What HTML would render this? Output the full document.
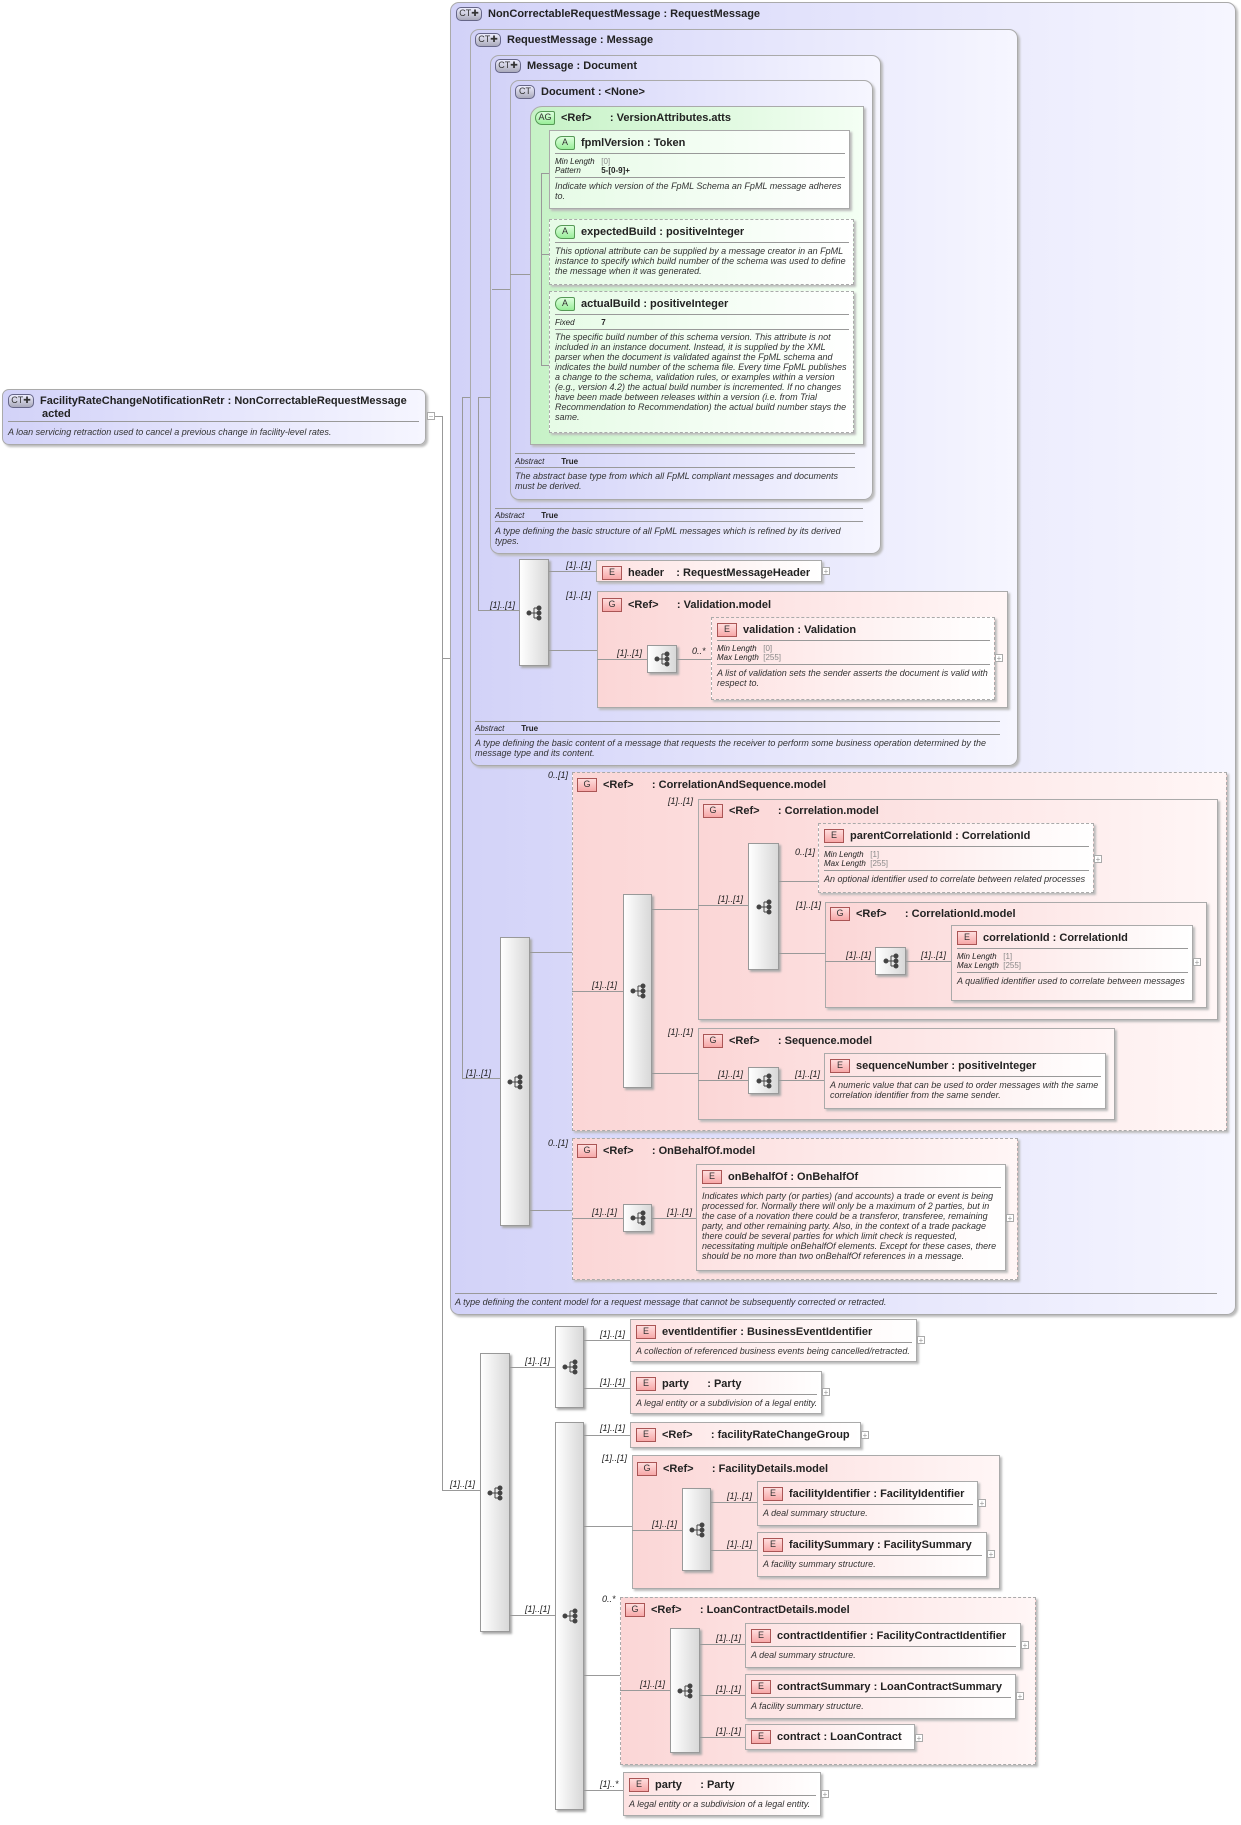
<!DOCTYPE html>
<html><head><meta charset="utf-8"><style>
body{margin:0;width:1241px;height:1825px;background:#fff;position:relative;overflow:hidden;font-family:"Liberation Sans",sans-serif;color:#222}
.b{position:absolute;box-sizing:border-box}
.ct{border:1px solid #aaa;border-radius:9px;background:linear-gradient(90deg,#d2d2f8,#f6f6ff);box-shadow:2px 2px 2px #bbb}
.ag{border:1px solid #aaa;background:linear-gradient(90deg,#c6f2c6,#f4fff4);box-shadow:2px 2px 2px #bbb}
.g{border:1px solid #aaa;background:linear-gradient(90deg,#fbd6d6,#fff6f6);box-shadow:2px 2px 2px #bbb}
.el{border:1px solid #aaa;background:linear-gradient(90deg,#fde2e2,#fff);box-shadow:2px 2px 2px #bbb;padding:4px 4px 0 5px}
.at{border:1px solid #aaa;background:linear-gradient(90deg,#e6fbe6,#fff);box-shadow:2px 2px 2px #bbb;padding:4px 4px 0 5px}
.ds{border-style:dashed}
.t{position:absolute;font-weight:bold;font-size:11px;white-space:nowrap}
.h{font-weight:bold;font-size:11px;white-space:nowrap;height:18px;line-height:16px;border-bottom:1px solid #999;margin-bottom:3px}
.i{display:inline-block;font-weight:normal;font-size:9px;line-height:11px;text-align:center;border:1px solid #a55;background:linear-gradient(#fdd,#f7a8a8);width:18px;height:12px;margin-right:6px;vertical-align:middle;color:#333}
.ia{border-color:#595;background:linear-gradient(#dfd,#9e9);border-radius:7px 2px 2px 7px}
.ic{border-color:#668;background:linear-gradient(#eef,#aab);border-radius:5px;width:24px}
.d{font-style:italic;font-size:9px;line-height:10px;color:#333}
.nw{white-space:nowrap}
.p{font-size:8px;line-height:9px}
.p i{display:inline-block;width:44px}
.p span{color:#888}
.l{position:absolute;background:#999}
.n{position:absolute;font-style:italic;font-size:9px;color:#222;white-space:nowrap}
.sq{position:absolute;box-sizing:border-box;border:1px solid #999;background:linear-gradient(90deg,#fff,#d8d8d8);box-shadow:2px 2px 2px #aaa}
.sq svg{position:absolute;left:50%;top:50%;margin:-8px 0 0 -8px}
.pl{position:absolute;width:8px;height:8px;border:1px solid #aaa;background:#fff;font-size:8px;line-height:7px;text-align:center;color:#999;box-sizing:border-box}
.hr{position:absolute;height:1px;background:#999}
</style></head><body>

<!-- root -->
<div class="b ct" style="left:2px;top:389px;width:424px;height:56px;border-radius:7px">
<div class="t" style="left:5px;top:4px;line-height:12px"><span class="i ic">CT✚</span>FacilityRateChangeNotificationRetr : NonCorrectableRequestMessage<br><span style="margin-left:34px">acted</span></div>
<div class="hr" style="left:5px;right:6px;top:31px"></div>
<div class="d" style="position:absolute;left:5px;top:37px">A loan servicing retraction used to cancel a previous change in facility-level rates.</div>
</div>
<div class="pl" style="left:427px;top:412px">−</div>
<div class="l" style="left:435px;top:416px;width:8px;height:1px"></div>
<div class="l" style="left:442px;top:416px;width:1px;height:1075px"></div>
<div class="l" style="left:442px;top:658px;width:9px;height:1px"></div>
<div class="l" style="left:442px;top:1490px;width:38px;height:1px"></div>
<div class="n" style="left:450px;top:1479px">[1]..[1]</div>

<!-- outer CT -->
<div class="b ct" style="left:450px;top:2px;width:786px;height:1313px"></div>
<div class="t" style="left:456px;top:7px"><span class="i ic">CT✚</span>NonCorrectableRequestMessage : RequestMessage</div>
<div class="hr" style="left:455px;width:762px;top:1293px"></div>
<div class="d" style="position:absolute;left:455px;top:1297px">A type defining the content model for a request message that cannot be subsequently corrected or retracted.</div>
<div class="l" style="left:462px;top:397px;width:1px;height:682px"></div>
<div class="l" style="left:462px;top:397px;width:8px;height:1px"></div>
<div class="l" style="left:462px;top:1078px;width:38px;height:1px"></div>
<div class="n" style="left:466px;top:1068px">[1]..[1]</div>

<!-- RequestMessage -->
<div class="b ct" style="left:470px;top:29px;width:548px;height:737px"></div>
<div class="t" style="left:475px;top:33px"><span class="i ic">CT✚</span>RequestMessage : Message</div>
<div class="hr" style="left:475px;width:525px;top:721px"></div>
<div class="p" style="position:absolute;left:475px;top:724px"><i>Abstract</i> <b>True</b></div>
<div class="hr" style="left:475px;width:525px;top:734px"></div>
<div class="d" style="position:absolute;left:475px;top:738px;width:525px">A type defining the basic content of a message that requests the receiver to perform some business operation determined by the message type and its content.</div>
<div class="l" style="left:478px;top:397px;width:1px;height:213px"></div>
<div class="l" style="left:478px;top:397px;width:12px;height:1px"></div>
<div class="l" style="left:478px;top:610px;width:41px;height:1px"></div>
<div class="n" style="left:490px;top:600px">[1]..[1]</div>

<!-- Message -->
<div class="b ct" style="left:490px;top:55px;width:391px;height:499px"></div>
<div class="t" style="left:495px;top:59px"><span class="i ic">CT✚</span>Message : Document</div>
<div class="hr" style="left:495px;width:368px;top:508px"></div>
<div class="p" style="position:absolute;left:495px;top:511px"><i>Abstract</i> <b>True</b></div>
<div class="hr" style="left:495px;width:368px;top:521px"></div>
<div class="d" style="position:absolute;left:495px;top:526px;width:368px">A type defining the basic structure of all FpML messages which is refined by its derived types.</div>
<div class="l" style="left:492px;top:289px;width:18px;height:1px"></div>

<!-- Document -->
<div class="b ct" style="left:510px;top:80px;width:363px;height:420px"></div>
<div class="t" style="left:515px;top:85px"><span class="i ic" style="width:18px">CT</span>Document : &lt;None&gt;</div>
<div class="hr" style="left:515px;width:340px;top:453px"></div>
<div class="p" style="position:absolute;left:515px;top:457px"><i>Abstract</i> <b>True</b></div>
<div class="hr" style="left:515px;width:340px;top:467px"></div>
<div class="d" style="position:absolute;left:515px;top:471px;width:340px">The abstract base type from which all FpML compliant messages and documents must be derived.</div>
<div class="l" style="left:510px;top:274px;width:20px;height:1px"></div>

<!-- AG -->
<div class="b ag" style="left:530px;top:106px;width:334px;height:339px;border-radius:12px 0 0 0"></div>
<div class="t" style="left:535px;top:111px"><span class="i ia">AG</span>&lt;Ref&gt; &nbsp;&nbsp;&nbsp;&nbsp; : VersionAttributes.atts</div>
<div class="l" style="left:541px;top:173px;width:1px;height:192px"></div>
<div class="l" style="left:541px;top:173px;width:8px;height:1px"></div>
<div class="l" style="left:541px;top:254px;width:8px;height:1px"></div>
<div class="l" style="left:541px;top:365px;width:8px;height:1px"></div>

<div class="b at" style="left:549px;top:130px;width:301px;height:79px">
<div class="h"><span class="i ia">A</span>fpmlVersion : Token</div>
<div class="p"><i>Min Length</i> <span>[0]</span><br><i>Pattern</i> <b>5-[0-9]+</b></div>
<div class="hr" style="position:relative;margin:2px 0 3px"></div>
<div class="d">Indicate which version of the FpML Schema an FpML message adheres to.</div></div>
<div class="b at ds" style="left:549px;top:219px;width:305px;height:66px">
<div class="h"><span class="i ia">A</span>expectedBuild : positiveInteger</div>
<div class="d">This optional attribute can be supplied by a message creator in an FpML instance to specify which build number of the schema was used to define the message when it was generated.</div></div>
<div class="b at ds" style="left:549px;top:291px;width:305px;height:142px">
<div class="h"><span class="i ia">A</span>actualBuild : positiveInteger</div>
<div class="p"><i>Fixed</i> <b>7</b></div>
<div class="hr" style="position:relative;margin:2px 0 2px"></div>
<div class="d">The specific build number of this schema version. This attribute is not included in an instance document. Instead, it is supplied by the XML parser when the document is validated against the FpML schema and indicates the build number of the schema file. Every time FpML publishes a change to the schema, validation rules, or examples within a version (e.g., version 4.2) the actual build number is incremented. If no changes have been made between releases within a version (i.e. from Trial Recommendation to Recommendation) the actual build number stays the same.</div></div>

<!-- header seq -->
<div class="sq" style="left:519px;top:559px;width:30px;height:107px"><svg width="16" height="16"><g fill="#444" stroke="#444"><circle cx="3" cy="8" r="2"/><line x1="3" y1="8" x2="8" y2="8"/><line x1="8" y1="3" x2="8" y2="13"/><line x1="8" y1="3" x2="12" y2="3"/><line x1="8" y1="8" x2="12" y2="8"/><line x1="8" y1="13" x2="12" y2="13"/><circle cx="13" cy="3" r="2"/><circle cx="13" cy="8" r="2"/><circle cx="13" cy="13" r="2"/></g></svg></div>
<div class="l" style="left:549px;top:571px;width:47px;height:1px"></div>
<div class="n" style="left:566px;top:560px">[1]..[1]</div>
<div class="l" style="left:549px;top:650px;width:48px;height:1px"></div>
<div class="n" style="left:566px;top:590px">[1]..[1]</div>
<div class="b el" style="left:596px;top:560px;width:226px;height:22px"><div class="h" style="border:0"><span class="i">E</span>header &nbsp;&nbsp; : RequestMessageHeader</div></div>
<div class="pl" style="left:822px;top:567px">+</div>

<div class="b g" style="left:597px;top:591px;width:411px;height:117px"></div>
<div class="t" style="left:602px;top:598px"><span class="i">G</span>&lt;Ref&gt; &nbsp;&nbsp;&nbsp;&nbsp; : Validation.model</div>
<div class="sq" style="left:647px;top:645px;width:30px;height:28px"><svg width="16" height="16"><g fill="#444" stroke="#444"><circle cx="3" cy="8" r="2"/><line x1="3" y1="8" x2="8" y2="8"/><line x1="8" y1="3" x2="8" y2="13"/><line x1="8" y1="3" x2="12" y2="3"/><line x1="8" y1="8" x2="12" y2="8"/><line x1="8" y1="13" x2="12" y2="13"/><circle cx="13" cy="3" r="2"/><circle cx="13" cy="8" r="2"/><circle cx="13" cy="13" r="2"/></g></svg></div>
<div class="l" style="left:597px;top:659px;width:50px;height:1px"></div>
<div class="n" style="left:617px;top:648px">[1]..[1]</div>
<div class="l" style="left:677px;top:659px;width:34px;height:1px"></div>
<div class="n" style="left:692px;top:646px">0..*</div>
<div class="b el ds" style="left:711px;top:617px;width:284px;height:83px">
<div class="h"><span class="i">E</span>validation : Validation</div>
<div class="p"><i>Min Length</i> <span>[0]</span><br><i>Max Length</i> <span>[255]</span></div>
<div class="hr" style="position:relative;margin:2px 0 3px"></div>
<div class="d">A list of validation sets the sender asserts the document is valid with respect to.</div></div>
<div class="pl" style="left:995px;top:654px">+</div>

<!-- big seq -->
<div class="sq" style="left:500px;top:937px;width:30px;height:289px"><svg width="16" height="16"><g fill="#444" stroke="#444"><circle cx="3" cy="8" r="2"/><line x1="3" y1="8" x2="8" y2="8"/><line x1="8" y1="3" x2="8" y2="13"/><line x1="8" y1="3" x2="12" y2="3"/><line x1="8" y1="8" x2="12" y2="8"/><line x1="8" y1="13" x2="12" y2="13"/><circle cx="13" cy="3" r="2"/><circle cx="13" cy="8" r="2"/><circle cx="13" cy="13" r="2"/></g></svg></div>
<div class="l" style="left:530px;top:952px;width:42px;height:1px"></div>
<div class="l" style="left:530px;top:1210px;width:42px;height:1px"></div>
<div class="n" style="left:548px;top:770px">0..[1]</div>
<div class="n" style="left:548px;top:1138px">0..[1]</div>

<!-- CorrelationAndSequence -->
<div class="b g ds" style="left:572px;top:772px;width:655px;height:359px"></div>
<div class="t" style="left:577px;top:778px"><span class="i">G</span>&lt;Ref&gt; &nbsp;&nbsp;&nbsp;&nbsp; : CorrelationAndSequence.model</div>
<div class="sq" style="left:623px;top:894px;width:29px;height:194px"><svg width="16" height="16"><g fill="#444" stroke="#444"><circle cx="3" cy="8" r="2"/><line x1="3" y1="8" x2="8" y2="8"/><line x1="8" y1="3" x2="8" y2="13"/><line x1="8" y1="3" x2="12" y2="3"/><line x1="8" y1="8" x2="12" y2="8"/><line x1="8" y1="13" x2="12" y2="13"/><circle cx="13" cy="3" r="2"/><circle cx="13" cy="8" r="2"/><circle cx="13" cy="13" r="2"/></g></svg></div>
<div class="l" style="left:572px;top:991px;width:51px;height:1px"></div>
<div class="n" style="left:592px;top:980px">[1]..[1]</div>
<div class="l" style="left:652px;top:909px;width:46px;height:1px"></div>
<div class="l" style="left:652px;top:1073px;width:46px;height:1px"></div>
<div class="n" style="left:668px;top:796px">[1]..[1]</div>
<div class="n" style="left:668px;top:1027px">[1]..[1]</div>

<div class="b g" style="left:698px;top:799px;width:520px;height:221px"></div>
<div class="t" style="left:703px;top:804px"><span class="i">G</span>&lt;Ref&gt; &nbsp;&nbsp;&nbsp;&nbsp; : Correlation.model</div>
<div class="sq" style="left:748px;top:843px;width:31px;height:127px"><svg width="16" height="16"><g fill="#444" stroke="#444"><circle cx="3" cy="8" r="2"/><line x1="3" y1="8" x2="8" y2="8"/><line x1="8" y1="3" x2="8" y2="13"/><line x1="8" y1="3" x2="12" y2="3"/><line x1="8" y1="8" x2="12" y2="8"/><line x1="8" y1="13" x2="12" y2="13"/><circle cx="13" cy="3" r="2"/><circle cx="13" cy="8" r="2"/><circle cx="13" cy="13" r="2"/></g></svg></div>
<div class="l" style="left:698px;top:905px;width:50px;height:1px"></div>
<div class="n" style="left:718px;top:894px">[1]..[1]</div>
<div class="l" style="left:779px;top:881px;width:39px;height:1px"></div>
<div class="n" style="left:795px;top:847px">0..[1]</div>
<div class="l" style="left:779px;top:953px;width:46px;height:1px"></div>
<div class="n" style="left:796px;top:900px">[1]..[1]</div>
<div class="b el ds" style="left:818px;top:823px;width:276px;height:70px">
<div class="h"><span class="i">E</span>parentCorrelationId : CorrelationId</div>
<div class="p"><i>Min Length</i> <span>[1]</span><br><i>Max Length</i> <span>[255]</span></div>
<div class="hr" style="position:relative;margin:2px 0 3px"></div>
<div class="d">An optional identifier used to correlate between related processes</div></div>
<div class="pl" style="left:1094px;top:855px">+</div>

<div class="b g" style="left:825px;top:902px;width:382px;height:106px"></div>
<div class="t" style="left:830px;top:907px"><span class="i">G</span>&lt;Ref&gt; &nbsp;&nbsp;&nbsp;&nbsp; : CorrelationId.model</div>
<div class="sq" style="left:875px;top:947px;width:31px;height:28px"><svg width="16" height="16"><g fill="#444" stroke="#444"><circle cx="3" cy="8" r="2"/><line x1="3" y1="8" x2="8" y2="8"/><line x1="8" y1="3" x2="8" y2="13"/><line x1="8" y1="3" x2="12" y2="3"/><line x1="8" y1="8" x2="12" y2="8"/><line x1="8" y1="13" x2="12" y2="13"/><circle cx="13" cy="3" r="2"/><circle cx="13" cy="8" r="2"/><circle cx="13" cy="13" r="2"/></g></svg></div>
<div class="l" style="left:825px;top:961px;width:50px;height:1px"></div>
<div class="n" style="left:846px;top:950px">[1]..[1]</div>
<div class="l" style="left:906px;top:961px;width:45px;height:1px"></div>
<div class="n" style="left:921px;top:950px">[1]..[1]</div>
<div class="b el" style="left:951px;top:925px;width:242px;height:76px">
<div class="h"><span class="i">E</span>correlationId : CorrelationId</div>
<div class="p"><i>Min Length</i> <span>[1]</span><br><i>Max Length</i> <span>[255]</span></div>
<div class="hr" style="position:relative;margin:2px 0 3px"></div>
<div class="d">A qualified identifier used to correlate between messages</div></div>
<div class="pl" style="left:1193px;top:958px">+</div>

<div class="b g" style="left:698px;top:1028px;width:417px;height:92px"></div>
<div class="t" style="left:703px;top:1034px"><span class="i">G</span>&lt;Ref&gt; &nbsp;&nbsp;&nbsp;&nbsp; : Sequence.model</div>
<div class="sq" style="left:748px;top:1067px;width:31px;height:27px"><svg width="16" height="16"><g fill="#444" stroke="#444"><circle cx="3" cy="8" r="2"/><line x1="3" y1="8" x2="8" y2="8"/><line x1="8" y1="3" x2="8" y2="13"/><line x1="8" y1="3" x2="12" y2="3"/><line x1="8" y1="8" x2="12" y2="8"/><line x1="8" y1="13" x2="12" y2="13"/><circle cx="13" cy="3" r="2"/><circle cx="13" cy="8" r="2"/><circle cx="13" cy="13" r="2"/></g></svg></div>
<div class="l" style="left:698px;top:1080px;width:50px;height:1px"></div>
<div class="n" style="left:718px;top:1069px">[1]..[1]</div>
<div class="l" style="left:779px;top:1080px;width:45px;height:1px"></div>
<div class="n" style="left:795px;top:1069px">[1]..[1]</div>
<div class="b el" style="left:824px;top:1053px;width:282px;height:56px">
<div class="h"><span class="i">E</span>sequenceNumber : positiveInteger</div>
<div class="d">A numeric value that can be used to order messages with the same correlation identifier from the same sender.</div></div>

<!-- OnBehalfOf -->
<div class="b g ds" style="left:572px;top:1138px;width:446px;height:142px"></div>
<div class="t" style="left:577px;top:1144px"><span class="i">G</span>&lt;Ref&gt; &nbsp;&nbsp;&nbsp;&nbsp; : OnBehalfOf.model</div>
<div class="sq" style="left:623px;top:1204px;width:29px;height:28px"><svg width="16" height="16"><g fill="#444" stroke="#444"><circle cx="3" cy="8" r="2"/><line x1="3" y1="8" x2="8" y2="8"/><line x1="8" y1="3" x2="8" y2="13"/><line x1="8" y1="3" x2="12" y2="3"/><line x1="8" y1="8" x2="12" y2="8"/><line x1="8" y1="13" x2="12" y2="13"/><circle cx="13" cy="3" r="2"/><circle cx="13" cy="8" r="2"/><circle cx="13" cy="13" r="2"/></g></svg></div>
<div class="l" style="left:572px;top:1218px;width:51px;height:1px"></div>
<div class="n" style="left:592px;top:1207px">[1]..[1]</div>
<div class="l" style="left:652px;top:1218px;width:44px;height:1px"></div>
<div class="n" style="left:667px;top:1207px">[1]..[1]</div>
<div class="b el" style="left:696px;top:1164px;width:310px;height:107px">
<div class="h"><span class="i">E</span>onBehalfOf : OnBehalfOf</div>
<div class="d">Indicates which party (or parties) (and accounts) a trade or event is being processed for. Normally there will only be a maximum of 2 parties, but in the case of a novation there could be a transferor, transferee, remaining party, and other remaining party. Also, in the context of a trade package there could be several parties for which limit check is requested, necessitating multiple onBehalfOf elements. Except for these cases, there should be no more than two onBehalfOf references in a message.</div></div>
<div class="pl" style="left:1006px;top:1214px">+</div>

<!-- lower -->
<div class="sq" style="left:480px;top:1353px;width:30px;height:279px"><svg width="16" height="16"><g fill="#444" stroke="#444"><circle cx="3" cy="8" r="2"/><line x1="3" y1="8" x2="8" y2="8"/><line x1="8" y1="3" x2="8" y2="13"/><line x1="8" y1="3" x2="12" y2="3"/><line x1="8" y1="8" x2="12" y2="8"/><line x1="8" y1="13" x2="12" y2="13"/><circle cx="13" cy="3" r="2"/><circle cx="13" cy="8" r="2"/><circle cx="13" cy="13" r="2"/></g></svg></div>
<div class="l" style="left:510px;top:1367px;width:45px;height:1px"></div>
<div class="n" style="left:525px;top:1356px">[1]..[1]</div>
<div class="l" style="left:510px;top:1615px;width:45px;height:1px"></div>
<div class="n" style="left:525px;top:1604px">[1]..[1]</div>

<div class="sq" style="left:555px;top:1326px;width:29px;height:82px"><svg width="16" height="16"><g fill="#444" stroke="#444"><circle cx="3" cy="8" r="2"/><line x1="3" y1="8" x2="8" y2="8"/><line x1="8" y1="3" x2="8" y2="13"/><line x1="8" y1="3" x2="12" y2="3"/><line x1="8" y1="8" x2="12" y2="8"/><line x1="8" y1="13" x2="12" y2="13"/><circle cx="13" cy="3" r="2"/><circle cx="13" cy="8" r="2"/><circle cx="13" cy="13" r="2"/></g></svg></div>
<div class="l" style="left:584px;top:1340px;width:46px;height:1px"></div>
<div class="n" style="left:600px;top:1329px">[1]..[1]</div>
<div class="l" style="left:584px;top:1388px;width:46px;height:1px"></div>
<div class="n" style="left:600px;top:1377px">[1]..[1]</div>
<div class="b el" style="left:630px;top:1319px;width:287px;height:43px">
<div class="h"><span class="i">E</span>eventIdentifier : BusinessEventIdentifier</div>
<div class="d nw">A collection of referenced business events being cancelled/retracted.</div></div>
<div class="pl" style="left:917px;top:1336px">+</div>
<div class="b el" style="left:630px;top:1371px;width:192px;height:43px">
<div class="h"><span class="i">E</span>party &nbsp;&nbsp;&nbsp;&nbsp; : Party</div>
<div class="d nw">A legal entity or a subdivision of a legal entity.</div></div>
<div class="pl" style="left:822px;top:1388px">+</div>

<div class="sq" style="left:555px;top:1422px;width:29px;height:388px"><svg width="16" height="16"><g fill="#444" stroke="#444"><circle cx="3" cy="8" r="2"/><line x1="3" y1="8" x2="8" y2="8"/><line x1="8" y1="3" x2="8" y2="13"/><line x1="8" y1="3" x2="12" y2="3"/><line x1="8" y1="8" x2="12" y2="8"/><line x1="8" y1="13" x2="12" y2="13"/><circle cx="13" cy="3" r="2"/><circle cx="13" cy="8" r="2"/><circle cx="13" cy="13" r="2"/></g></svg></div>
<div class="l" style="left:584px;top:1435px;width:46px;height:1px"></div>
<div class="n" style="left:600px;top:1423px">[1]..[1]</div>
<div class="l" style="left:584px;top:1526px;width:48px;height:1px"></div>
<div class="n" style="left:602px;top:1453px">[1]..[1]</div>
<div class="l" style="left:584px;top:1675px;width:36px;height:1px"></div>
<div class="n" style="left:602px;top:1594px">0..*</div>
<div class="l" style="left:584px;top:1790px;width:39px;height:1px"></div>
<div class="n" style="left:600px;top:1779px">[1]..*</div>

<div class="b el" style="left:630px;top:1422px;width:231px;height:26px"><div class="h" style="border:0"><span class="i">E</span>&lt;Ref&gt; &nbsp;&nbsp;&nbsp;&nbsp; : facilityRateChangeGroup</div></div>
<div class="pl" style="left:861px;top:1431px">+</div>

<div class="b g" style="left:632px;top:1455px;width:368px;height:134px"></div>
<div class="t" style="left:637px;top:1462px"><span class="i">G</span>&lt;Ref&gt; &nbsp;&nbsp;&nbsp;&nbsp; : FacilityDetails.model</div>
<div class="sq" style="left:682px;top:1488px;width:29px;height:83px"><svg width="16" height="16"><g fill="#444" stroke="#444"><circle cx="3" cy="8" r="2"/><line x1="3" y1="8" x2="8" y2="8"/><line x1="8" y1="3" x2="8" y2="13"/><line x1="8" y1="3" x2="12" y2="3"/><line x1="8" y1="8" x2="12" y2="8"/><line x1="8" y1="13" x2="12" y2="13"/><circle cx="13" cy="3" r="2"/><circle cx="13" cy="8" r="2"/><circle cx="13" cy="13" r="2"/></g></svg></div>
<div class="l" style="left:632px;top:1530px;width:50px;height:1px"></div>
<div class="n" style="left:652px;top:1519px">[1]..[1]</div>
<div class="l" style="left:711px;top:1502px;width:46px;height:1px"></div>
<div class="n" style="left:727px;top:1491px">[1]..[1]</div>
<div class="l" style="left:711px;top:1550px;width:46px;height:1px"></div>
<div class="n" style="left:727px;top:1539px">[1]..[1]</div>
<div class="b el" style="left:757px;top:1481px;width:221px;height:45px">
<div class="h"><span class="i">E</span>facilityIdentifier : FacilityIdentifier</div>
<div class="d">A deal summary structure.</div></div>
<div class="pl" style="left:978px;top:1499px">+</div>
<div class="b el" style="left:757px;top:1532px;width:230px;height:45px">
<div class="h"><span class="i">E</span>facilitySummary : FacilitySummary</div>
<div class="d">A facility summary structure.</div></div>
<div class="pl" style="left:987px;top:1550px">+</div>

<div class="b g ds" style="left:620px;top:1597px;width:416px;height:168px"></div>
<div class="t" style="left:625px;top:1603px"><span class="i">G</span>&lt;Ref&gt; &nbsp;&nbsp;&nbsp;&nbsp; : LoanContractDetails.model</div>
<div class="sq" style="left:670px;top:1628px;width:30px;height:125px"><svg width="16" height="16"><g fill="#444" stroke="#444"><circle cx="3" cy="8" r="2"/><line x1="3" y1="8" x2="8" y2="8"/><line x1="8" y1="3" x2="8" y2="13"/><line x1="8" y1="3" x2="12" y2="3"/><line x1="8" y1="8" x2="12" y2="8"/><line x1="8" y1="13" x2="12" y2="13"/><circle cx="13" cy="3" r="2"/><circle cx="13" cy="8" r="2"/><circle cx="13" cy="13" r="2"/></g></svg></div>
<div class="l" style="left:620px;top:1690px;width:50px;height:1px"></div>
<div class="n" style="left:640px;top:1679px">[1]..[1]</div>
<div class="l" style="left:700px;top:1644px;width:45px;height:1px"></div>
<div class="n" style="left:716px;top:1633px">[1]..[1]</div>
<div class="l" style="left:700px;top:1695px;width:45px;height:1px"></div>
<div class="n" style="left:716px;top:1684px">[1]..[1]</div>
<div class="l" style="left:700px;top:1737px;width:45px;height:1px"></div>
<div class="n" style="left:716px;top:1726px">[1]..[1]</div>
<div class="b el" style="left:745px;top:1623px;width:276px;height:45px">
<div class="h"><span class="i">E</span>contractIdentifier : FacilityContractIdentifier</div>
<div class="d">A deal summary structure.</div></div>
<div class="pl" style="left:1021px;top:1641px">+</div>
<div class="b el" style="left:745px;top:1674px;width:271px;height:45px">
<div class="h"><span class="i">E</span>contractSummary : LoanContractSummary</div>
<div class="d">A facility summary structure.</div></div>
<div class="pl" style="left:1016px;top:1692px">+</div>
<div class="b el" style="left:745px;top:1724px;width:170px;height:26px"><div class="h" style="border:0"><span class="i">E</span>contract : LoanContract</div></div>
<div class="pl" style="left:915px;top:1734px">+</div>

<div class="b el" style="left:623px;top:1772px;width:198px;height:44px">
<div class="h"><span class="i">E</span>party &nbsp;&nbsp;&nbsp;&nbsp; : Party</div>
<div class="d nw">A legal entity or a subdivision of a legal entity.</div></div>
<div class="pl" style="left:821px;top:1790px">+</div>

</body></html>
